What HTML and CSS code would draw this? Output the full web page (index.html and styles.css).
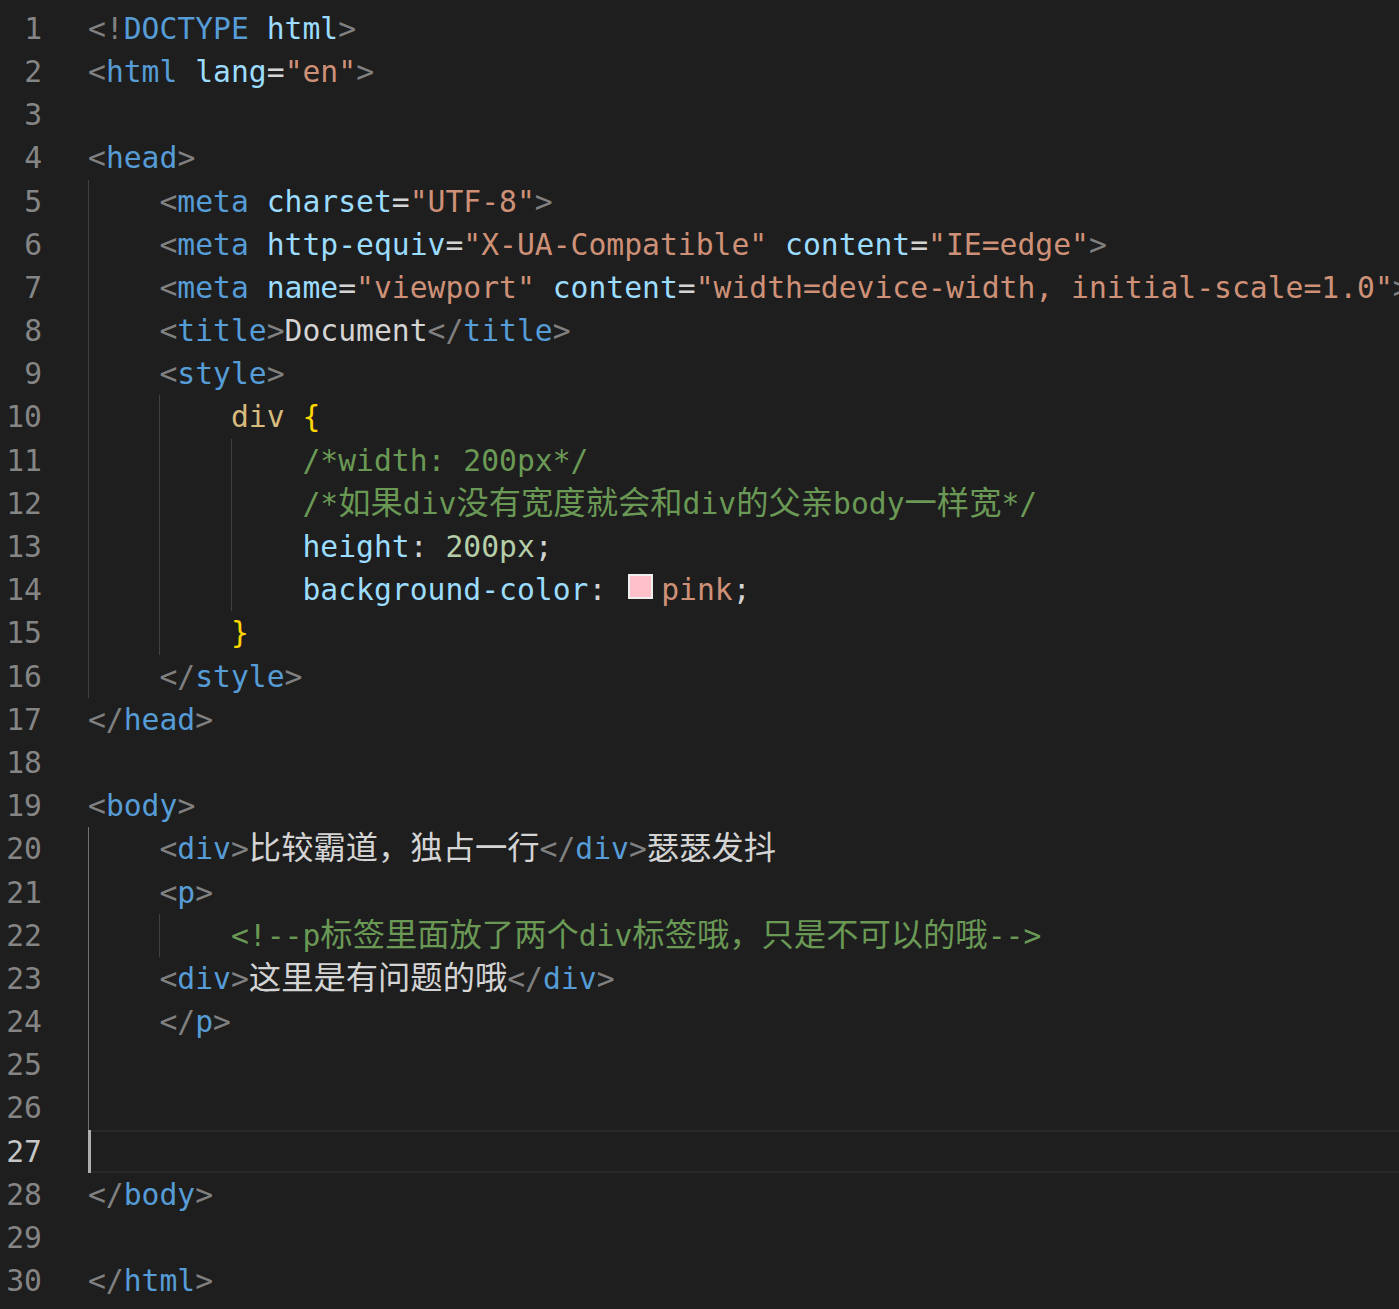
FILE: index.html
```html
<!DOCTYPE html>
<html lang="zh">
<head>
<meta charset="UTF-8">
<title>Editor</title>
<link rel="stylesheet" href="styles.css">
</head>
<body>
<div class="editor">
  <div class="ln"><span class="num">1</span><span class="code"><span class="p">&lt;!</span><span class="t">DOCTYPE</span> <span class="a">html</span><span class="p">&gt;</span></span></div>
  <div class="ln"><span class="num">2</span><span class="code"><span class="p">&lt;</span><span class="t">html</span> <span class="a">lang</span><span class="o">=</span><span class="s">"en"</span><span class="p">&gt;</span></span></div>
  <div class="ln"><span class="num">3</span><span class="code"></span></div>
  <div class="ln"><span class="num">4</span><span class="code"><span class="p">&lt;</span><span class="t">head</span><span class="p">&gt;</span></span></div>
  <div class="ln"><span class="num">5</span><span class="code"><span class="i g"></span><span class="p">&lt;</span><span class="t">meta</span> <span class="a">charset</span><span class="o">=</span><span class="s">"UTF-8"</span><span class="p">&gt;</span></span></div>
  <div class="ln"><span class="num">6</span><span class="code"><span class="i g"></span><span class="p">&lt;</span><span class="t">meta</span> <span class="a">http-equiv</span><span class="o">=</span><span class="s">"X-UA-Compatible"</span> <span class="a">content</span><span class="o">=</span><span class="s">"IE=edge"</span><span class="p">&gt;</span></span></div>
  <div class="ln"><span class="num">7</span><span class="code"><span class="i g"></span><span class="p">&lt;</span><span class="t">meta</span> <span class="a">name</span><span class="o">=</span><span class="s">"viewport"</span> <span class="a">content</span><span class="o">=</span><span class="s">"width=device-width, initial-scale=1.0"</span><span class="p">&gt;</span></span></div>
  <div class="ln"><span class="num">8</span><span class="code"><span class="i g"></span><span class="p">&lt;</span><span class="t">title</span><span class="p">&gt;</span><span class="o">Document</span><span class="p">&lt;/</span><span class="t">title</span><span class="p">&gt;</span></span></div>
  <div class="ln"><span class="num">9</span><span class="code"><span class="i g"></span><span class="p">&lt;</span><span class="t">style</span><span class="p">&gt;</span></span></div>
  <div class="ln"><span class="num">10</span><span class="code"><span class="i g"></span><span class="i g"></span><span class="sel">div</span> <span class="br">{</span></span></div>
  <div class="ln"><span class="num">11</span><span class="code"><span class="i g"></span><span class="i g"></span><span class="i g"></span><span class="c">/*width: 200px*/</span></span></div>
  <div class="ln"><span class="num">12</span><span class="code"><span class="i g"></span><span class="i g"></span><span class="i g"></span><span class="c">/*<span class="cj">如果</span>div<span class="cj">没有宽度就会和</span>div<span class="cj">的父亲</span>body<span class="cj">一样宽</span>*/</span></span></div>
  <div class="ln"><span class="num">13</span><span class="code"><span class="i g"></span><span class="i g"></span><span class="i g"></span><span class="a">height</span><span class="o">: </span><span class="n">200px</span><span class="o">;</span></span></div>
  <div class="ln"><span class="num">14</span><span class="code"><span class="i g"></span><span class="i g"></span><span class="i g"></span><span class="a">background-color</span><span class="o">: </span><span class="swatch"></span><span class="s">pink</span><span class="o">;</span></span></div>
  <div class="ln"><span class="num">15</span><span class="code"><span class="i g"></span><span class="i g"></span><span class="br">}</span></span></div>
  <div class="ln"><span class="num">16</span><span class="code"><span class="i g"></span><span class="p">&lt;/</span><span class="t">style</span><span class="p">&gt;</span></span></div>
  <div class="ln"><span class="num">17</span><span class="code"><span class="p">&lt;/</span><span class="t">head</span><span class="p">&gt;</span></span></div>
  <div class="ln"><span class="num">18</span><span class="code"></span></div>
  <div class="ln"><span class="num">19</span><span class="code"><span class="p">&lt;</span><span class="t">body</span><span class="p">&gt;</span></span></div>
  <div class="ln"><span class="num">20</span><span class="code"><span class="i ga"></span><span class="p">&lt;</span><span class="t">div</span><span class="p">&gt;</span><span class="o cj">比较霸道，独占一行</span><span class="p">&lt;/</span><span class="t">div</span><span class="p">&gt;</span><span class="o cj">瑟瑟发抖</span></span></div>
  <div class="ln"><span class="num">21</span><span class="code"><span class="i ga"></span><span class="p">&lt;</span><span class="t">p</span><span class="p">&gt;</span></span></div>
  <div class="ln"><span class="num">22</span><span class="code"><span class="i ga"></span><span class="i g"></span><span class="c">&lt;!--p<span class="cj">标签里面放了两个</span>div<span class="cj">标签哦，只是不可以的哦</span>--&gt;</span></span></div>
  <div class="ln"><span class="num">23</span><span class="code"><span class="i ga"></span><span class="p">&lt;</span><span class="t">div</span><span class="p">&gt;</span><span class="o cj">这里是有问题的哦</span><span class="p">&lt;/</span><span class="t">div</span><span class="p">&gt;</span></span></div>
  <div class="ln"><span class="num">24</span><span class="code"><span class="i ga"></span><span class="p">&lt;/</span><span class="t">p</span><span class="p">&gt;</span></span></div>
  <div class="ln"><span class="num">25</span><span class="code"><span class="i ga"></span></span></div>
  <div class="ln"><span class="num">26</span><span class="code"><span class="i ga"></span></span></div>
  <div class="ln current"><span class="num">27</span><span class="code"><span class="cursor"></span></span></div>
  <div class="ln"><span class="num">28</span><span class="code"><span class="p">&lt;/</span><span class="t">body</span><span class="p">&gt;</span></span></div>
  <div class="ln"><span class="num">29</span><span class="code"></span></div>
  <div class="ln"><span class="num">30</span><span class="code"><span class="p">&lt;/</span><span class="t">html</span><span class="p">&gt;</span></span></div>
</div>
</body>
</html>
```
FILE: styles.css
```css
html, body {
  margin: 0;
  padding: 0;
  background: #1e1e1e;
  overflow: hidden;
}

.editor {
  display: flex;
  flex-direction: column;
  padding-top: 6.8px;
  font-family: "DejaVu Sans Mono", "Noto Sans CJK SC", monospace;
  font-size: 29.7px;
  color: #d4d4d4;
}

.ln {
  display: flex;
  height: 43.2px;
  line-height: 43.2px;
}

.num {
  flex: none;
  width: 42px;
  text-align: right;
  color: #858585;
}

.current .num {
  color: #c6c6c6;
}

.code {
  flex: 1;
  min-width: 0;
  margin-left: 46px;
  white-space: pre;
  overflow: visible;
}

.current .code {
  box-shadow: inset 0 2px 0 #282828, inset 0 -2px 0 #282828;
}

.cursor {
  display: inline-block;
  width: 3px;
  height: 43.2px;
  vertical-align: top;
  background: #aeafad;
}

.i {
  display: inline-block;
  width: 4ch;
  height: 43.2px;
  vertical-align: top;
}

.g {
  box-shadow: inset 1px 0 0 #404040;
}

.ga {
  box-shadow: inset 1px 0 0 #707070;
}

.cj {
  font-family: "Noto Sans CJK SC", sans-serif;
  font-size: 32.3px;
  line-height: 1;
}

.p { color: #808080; }
.t { color: #569cd6; }
.a { color: #9cdcfe; }
.s { color: #ce9178; }
.o { color: #d4d4d4; }
.c { color: #6a9955; }
.sel { color: #d7ba7d; }
.br { color: #ffd700; }
.n { color: #b5cea8; }

.swatch {
  display: inline-block;
  box-sizing: border-box;
  width: 25px;
  height: 25px;
  margin: 6px 8px 0 4px;
  vertical-align: top;
  background: #ffc0cb;
  border: 2px solid #eeeeee;
}
```
